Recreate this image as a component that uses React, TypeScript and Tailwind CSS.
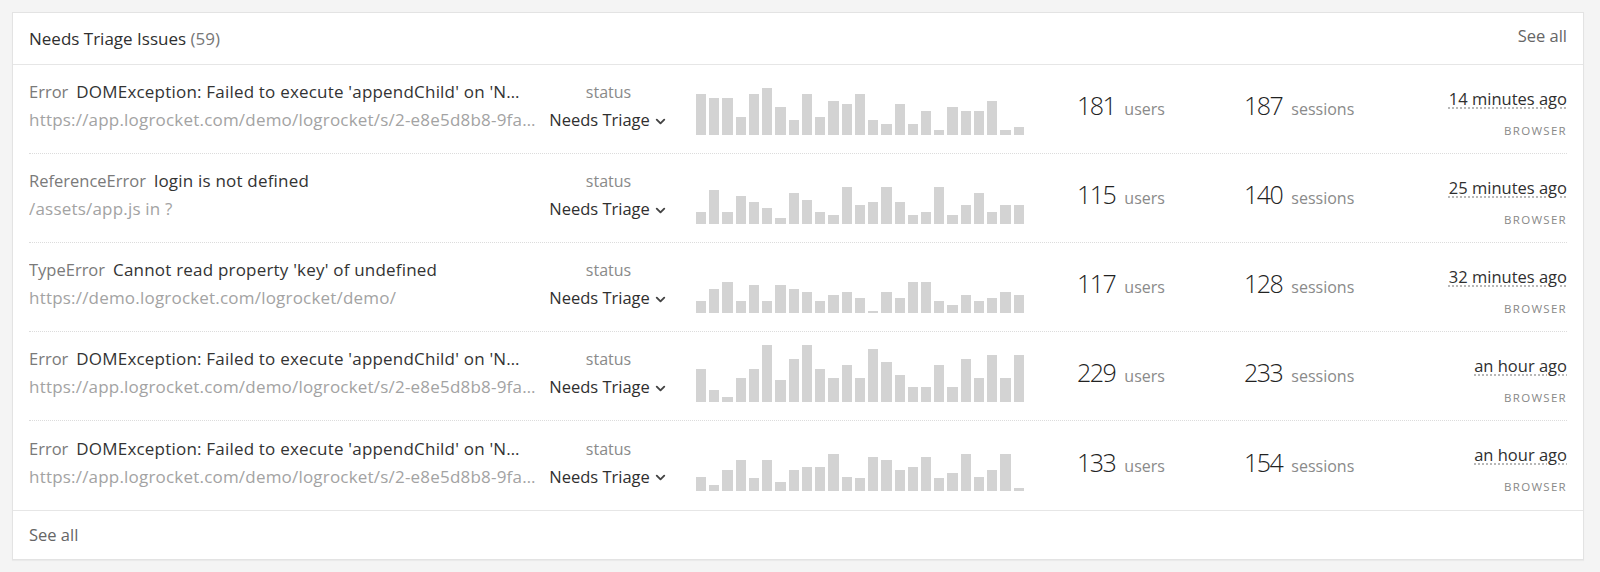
import { ChevronDown } from 'lucide-react';

type Issue = {
  kind: string;
  message: string;
  source: string;
  users: number;
  sessions: number;
  time: string;
  bars: number[];
};

const issues: Issue[] = [
  {
    kind: 'Error',
    message: "DOMException: Failed to execute 'appendChild' on 'N…",
    source: 'https://app.logrocket.com/demo/logrocket/s/2-e8e5d8b8-9fa…',
    users: 181,
    sessions: 187,
    time: '14 minutes ago',
    bars: [41, 37, 37, 18, 41, 47, 28, 15, 41, 18, 34, 31, 41, 15, 11, 31, 11, 24, 5, 28, 24, 24, 34, 5, 8],
  },
  {
    kind: 'ReferenceError',
    message: 'login is not defined',
    source: '/assets/app.js in ?',
    users: 115,
    sessions: 140,
    time: '25 minutes ago',
    bars: [12, 34, 12, 28, 22, 16, 6, 31, 24, 12, 9, 37, 19, 22, 37, 22, 9, 12, 37, 9, 19, 31, 12, 19, 19],
  },
  {
    kind: 'TypeError',
    message: "Cannot read property 'key' of undefined",
    source: 'https://demo.logrocket.com/logrocket/demo/',
    users: 117,
    sessions: 128,
    time: '32 minutes ago',
    bars: [12, 24, 31, 12, 28, 12, 28, 24, 21, 12, 18, 21, 15, 2, 21, 15, 31, 31, 12, 8, 18, 12, 15, 21, 18],
  },
  {
    kind: 'Error',
    message: "DOMException: Failed to execute 'appendChild' on 'N…",
    source: 'https://app.logrocket.com/demo/logrocket/s/2-e8e5d8b8-9fa…',
    users: 229,
    sessions: 233,
    time: 'an hour ago',
    bars: [33, 12, 5, 24, 33, 57, 22, 43, 57, 33, 24, 37, 24, 53, 40, 27, 15, 15, 37, 15, 43, 24, 47, 24, 47],
  },
  {
    kind: 'Error',
    message: "DOMException: Failed to execute 'appendChild' on 'N…",
    source: 'https://app.logrocket.com/demo/logrocket/s/2-e8e5d8b8-9fa…',
    users: 133,
    sessions: 154,
    time: 'an hour ago',
    bars: [14, 6, 21, 31, 13, 31, 9, 21, 24, 24, 37, 14, 13, 34, 31, 21, 24, 34, 13, 18, 37, 14, 21, 37, 3],
  },
];

function Sparkline({ bars }: { bars: number[] }) {
  return (
    <div className="flex items-end gap-[3px] w-[328px] h-[57px] ml-[20px] shrink-0">
      {bars.map((h, i) => (
        <div key={i} className="flex-1 bg-[#d3d3d3]" style={{ height: `${h}px` }} />
      ))}
    </div>
  );
}

function IssueRow({ issue }: { issue: Issue }) {
  return (
    <div className="flex items-center h-[89px] pb-[6px] border-b border-dotted border-[#dcdcdc] last:border-b-0">
      {/* message + source */}
      <div className="w-[512px] shrink-0 overflow-hidden whitespace-nowrap leading-[28px]">
        <div>
          <span className="text-[16.5px] text-[#7a7a7a]">{issue.kind}</span>
          <span className="ml-[8px] text-[17px] tracking-[0.2px] text-[#333]">{issue.message}</span>
        </div>
        <div className="text-[17px] tracking-[0.2px] text-[#a3a3a3]">{issue.source}</div>
      </div>

      {/* status */}
      <div className="w-[135px] shrink-0 text-center leading-[28px]">
        <div className="text-[16px] text-[#8a8a8a]">status</div>
        <div className="flex items-center justify-center gap-[3px] text-[16.5px] text-[#2f2f2f]">
          Needs Triage
          <ChevronDown size={15} strokeWidth={3} className="text-[#444] mt-[2px]" />
        </div>
      </div>

      <Sparkline bars={issue.bars} />

      {/* users */}
      <div className="ml-[53px] w-[167px] shrink-0 flex items-baseline gap-[9px]">
        <span className="text-[25px] text-[#222] font-light tracking-[-1.5px]">{issue.users}</span>
        <span className="text-[16px] text-[#8a8a8a]">users</span>
      </div>

      {/* sessions */}
      <div className="flex-1 flex items-baseline gap-[9px]">
        <span className="text-[25px] text-[#222] font-light tracking-[-1.5px]">{issue.sessions}</span>
        <span className="text-[16px] text-[#8a8a8a]">sessions</span>
      </div>

      {/* time */}
      <div className="mt-[14px] flex flex-col items-end">
        <span className="text-[16.5px] leading-[20px] text-[#2f2f2f] underline decoration-dotted decoration-[#aaa] underline-offset-[3px]">
          {issue.time}
        </span>
        <span className="mt-[15px] text-[11.5px] leading-[14px] tracking-[1.3px] text-[#888]">BROWSER</span>
      </div>
    </div>
  );
}

export default function App() {
  return (
    <div className="min-h-screen bg-[#f4f4f4] pt-3 pb-3 pl-3 pr-4 font-['Open_Sans',sans-serif]">
      <div className="bg-white border border-[#e3e3e3] shadow-[0_1px_1px_rgba(0,0,0,0.04)]">
        <div className="h-[52px] px-4 flex items-center justify-between border-b border-[#e6e6e6]">
          <div className="text-[17px] text-[#2f2f2f]">
            Needs Triage Issues <span className="text-[#777]">(59)</span>
          </div>
          <span className="text-[16.5px] text-[#666] -mt-[4px]">See all</span>
        </div>

        <div className="px-4">
          {issues.map((issue, i) => (
            <IssueRow key={i} issue={issue} />
          ))}
        </div>

        <div className="h-[49px] px-4 flex items-center border-t border-[#e6e6e6]">
          <span className="text-[16.5px] text-[#666]">See all</span>
        </div>
      </div>
    </div>
  );
}
